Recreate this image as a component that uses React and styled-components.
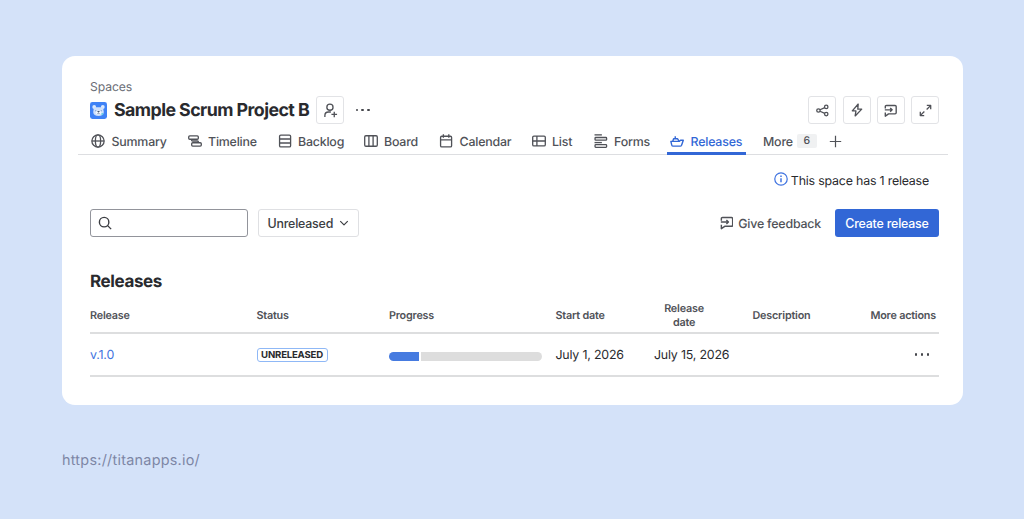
import React from "react";
import styled, { createGlobalStyle } from "styled-components";

const Global = createGlobalStyle`
  * { box-sizing: border-box; }
  body {
    margin: 0;
    background: #d4e2f9;
    font-family: Inter, "Liberation Sans", sans-serif;
    letter-spacing: -0.2px;
    text-rendering: geometricPrecision;
    color: #292a2e;
  }
  button { letter-spacing: inherit; }
`;

const Page = styled.main`
  width: 1024px;
  height: 519px;
  padding: 56px 61px 0 62px;
  overflow: hidden;
`;

const Card = styled.section`
  height: 349px;
  padding: 22px 16px 0;
  background: #fff;
  border-radius: 13px;
`;

const Inset = styled.div`
  padding: 0 8px 0 12px;
`;

const Crumb = styled.div`
  height: 16px;
  line-height: 17px;
  font-size: 12.2px;
  color: #6b6e76;
  letter-spacing: -0.1px;
`;

const TitleRow = styled.div`
  display: flex;
  align-items: center;
  height: 28px;
  margin-top: 2px;
`;

const Title = styled.h1`
  width: 196px;
  margin: 2px 6px 0 7px;
  font-size: 17.8px;
  font-weight: 650;
  line-height: 28px;
  white-space: nowrap;
  letter-spacing: -0.56px;
`;

const IconButton = styled.button`
  display: flex;
  align-items: center;
  justify-content: center;
  width: 28px;
  height: 28px;
  padding: 0;
  border: 1px solid #e2e3e6;
  border-radius: 3px;
  background: #fff;
  color: #505258;
`;

const Actions = styled.div`
  display: flex;
  gap: 6.2px;
  margin-left: auto;
`;

const Dots = styled.span`
  display: flex;
  gap: 3.6px;
  margin-left: ${(p) => p.$left || 0}px;
  margin-right: ${(p) => p.$right || 0}px;
  &::before, &::after, & > i {
    content: "";
    width: 2.4px;
    height: 2.4px;
    border-radius: 50%;
    background: #44464b;
  }
`;

const TabBar = styled.nav`
  display: flex;
  width: 870px;
  height: 31px;
  padding-left: 13px;
  border-bottom: 1px solid #dddee1;
`;

const Tab = styled.a`
  position: relative;
  display: flex;
  align-items: center;
  gap: ${(p) => p.$gap ?? 6.5}px;
  width: ${(p) => p.$w}px;
  height: 30px;
  padding-top: 4px;
  font-size: 12.4px;
  font-weight: 530;
  color: ${(p) => (p.$active ? "#3267d6" : "#505258")};
  white-space: nowrap;
  svg { flex: none; }
`;

const Underline = styled.span`
  position: absolute;
  left: -3px;
  bottom: -1px;
  width: 79px;
  height: 3px;
  background: #3267d6;
`;

const Badge = styled.span`
  width: 20px;
  height: 14px;
  border-radius: 2px;
  background: #f0f1f2;
  font-size: 10.5px;
  line-height: 14px;
  text-align: center;
`;

const Notice = styled.div`
  display: flex;
  justify-content: flex-end;
  align-items: center;
  gap: 3px;
  height: 20px;
  margin-top: 15px;
  padding-right: 10px;
  font-size: 12.4px;
`;

const NoticeIcon = styled.span`
  display: flex;
  padding-bottom: 2px;
  color: #3f73e0;
`;

const Toolbar = styled.div`
  display: flex;
  align-items: center;
  height: 28px;
  margin-top: 19px;
`;

const Search = styled.div`
  display: flex;
  align-items: center;
  width: 157.5px;
  height: 28px;
  padding-left: 7px;
  border: 1px solid #92949b;
  border-radius: 3px;
  color: #3b3d42;
`;

const Select = styled.button`
  display: flex;
  align-items: center;
  gap: 5.5px;
  width: 101.5px;
  height: 28px;
  margin-left: 10px;
  padding: 0 0 0 9px;
  border: 1px solid #dfe0e3;
  border-radius: 3px;
  background: #fff;
  color: #3b3d42;
  font: 530 12.4px Inter, sans-serif;
`;

const Feedback = styled.div`
  display: flex;
  align-items: center;
  gap: 5px;
  margin-left: auto;
  color: #505258;
  font-size: 12.4px;
  font-weight: 530;
`;

const Primary = styled.button`
  width: 104px;
  height: 28px;
  margin-left: 14px;
  padding: 0;
  border: 0;
  border-radius: 3px;
  background: #3267d6;
  color: #fff;
  font: 530 12.4px Inter, sans-serif;
  white-space: nowrap;
`;

const Heading = styled.h2`
  margin: 33px 0 0;
  font-size: 17px;
  font-weight: 650;
  line-height: 25px;
  letter-spacing: -0.38px;
`;

const Row = styled.div`
  display: grid;
  grid-template-columns: 166.5px 132.5px 166.5px 98.5px 98.5px 1fr auto;
  align-items: center;
  height: ${(p) => p.$h}px;
  padding-top: ${(p) => p.$top || 0}px;
  border-bottom: 2px solid #dddedf;
  font-size: 12.4px;
`;

const Head = styled.span`
  width: ${(p) => (p.$narrow ? "60px" : "auto")};
  text-align: ${(p) => (p.$narrow ? "center" : "left")};
  padding-right: ${(p) => p.$end || 0}px;
  font-size: 10.8px;
  font-weight: 600;
  line-height: 13.6px;
  color: #505258;
`;

const Link = styled.a`
  color: #3f73e0;
`;

const Lozenge = styled.span`
  justify-self: start;
  width: 71px;
  height: 14px;
  margin-top: 1px;
  border: 1px solid #8fb8f6;
  border-radius: 3px;
  font-size: 9.6px;
  font-weight: 650;
  line-height: 13px;
  text-align: center;
`;

const Progress = styled.div`
  display: flex;
  gap: 2px;
  width: 153px;
  height: 9px;
  margin-top: 3px;
  border-radius: 5px;
  overflow: hidden;
`;

const Segment = styled.span`
  flex: ${(p) => p.$grow};
  background: ${(p) => p.$color};
`;

const Source = styled.footer`
  margin-top: 46px;
  font-size: 14.4px;
  line-height: 20px;
  letter-spacing: 0.25px;
  color: #7d86a5;
`;

const Icon = ({ size = 14, w = 1.5, children }) => (
  <svg width={size} height={size} viewBox="0 0 16 16" fill="none" stroke="currentColor" strokeWidth={w} strokeLinejoin="round">
    {children}
  </svg>
);

const GlobeIcon = () => (
  <Icon>
    <circle cx="8" cy="8" r="7" />
    <ellipse cx="8" cy="8" rx="3" ry="7" />
    <path d="M1 8h14" />
  </Icon>
);
const TimelineIcon = () => (
  <Icon>
    <rect x="0.8" y="2.2" width="11" height="3.8" rx="1.2" />
    <rect x="4.2" y="10" width="11" height="3.8" rx="1.2" />
    <path d="M4 6v.6c0 .8.6 1.4 1.4 1.4h5.2c.8 0 1.4.6 1.4 1.4v.6" />
  </Icon>
);
const BacklogIcon = () => (
  <Icon>
    <rect x="1.8" y="1.2" width="12.6" height="13.6" rx="1.4" />
    <path d="M1.8 5.7h12.6M1.8 10.3h12.6" />
  </Icon>
);
const BoardIcon = () => (
  <Icon>
    <rect x="0.8" y="2" width="14.4" height="12" rx="1.4" />
    <path d="M5.6 2v12M10.4 2v12" />
  </Icon>
);
const CalendarIcon = () => (
  <Icon>
    <rect x="1.8" y="2.6" width="12.6" height="12.2" rx="1.4" />
    <path d="M1.8 6.7h12.6M5 0.4v4M11.2 0.4v4" />
  </Icon>
);
const ListIcon = () => (
  <Icon>
    <rect x="0.8" y="2.4" width="14.4" height="11.2" rx="1.4" />
    <path d="M0.8 8h14.4M5.6 2.4v11.2" />
  </Icon>
);
const FormsIcon = () => (
  <Icon>
    <path d="M0.6 1h8.4" />
    <rect x="1.2" y="4" width="13.2" height="3" rx="0.8" />
    <path d="M0.6 9.8h8.4" />
    <rect x="1.2" y="12.2" width="13.2" height="3" rx="0.8" />
  </Icon>
);
const ShipIcon = () => (
  <Icon w={1.6}>
    <path d="M1 8.4h9.6l1.4-1.2h3.2l-2 5.6c-.3.7-.8 1.1-1.5 1.1H3.6c-.8 0-1.4-.5-1.6-1.2z" />
    <path d="M3.2 8.2l.9-2.8h4.6l1.5 2.8M6 5V2.6" />
  </Icon>
);
const PlusIcon = () => (
  <Icon size={13}>
    <path d="M8 1v14M1 8h14" />
  </Icon>
);
const PersonAddIcon = () => (
  <Icon size={15} w={1.4}>
    <circle cx="7.4" cy="4.4" r="3.3" />
    <path d="M2 14.8v-1.4c0-2.4 1.6-3.8 3.8-3.8h2.6M12 9.2v6M9 12.2h6" />
  </Icon>
);
const ShareIcon = () => (
  <Icon size={13} w={1.6}>
    <circle cx="3" cy="8" r="2.1" />
    <circle cx="12.6" cy="3.6" r="2.1" />
    <circle cx="12.6" cy="12.4" r="2.1" />
    <path d="M5 7.1l5.7-2.6M5 8.9l5.7 2.6" />
  </Icon>
);
const BoltIcon = () => (
  <Icon size={14}>
    <path d="M9.4 1.2L2.6 9h4.2l-.9 5.8L13.4 7H8.9z" />
  </Icon>
);
const FeedbackIcon = ({ size = 13.5, w = 1.7 }) => (
  <Icon size={size} w={w}>
    <path d="M1.6 5.6V3.2c0-.8.6-1.4 1.4-1.4h10.6c.8 0 1.4.6 1.4 1.4v7.6c0 .8-.6 1.4-1.4 1.4H5.6L1.6 15v-4.6" />
    <path d="M1 7.2h8.6M7.6 4.8L10 7.2 7.6 9.6" />
  </Icon>
);
const ExpandIcon = () => (
  <Icon size={13} w={1.6}>
    <path d="M9.6 1.8h4.8v4.8M14.2 2L9.4 6.8M6.4 14.2H1.6V9.4M1.8 14l4.8-4.8" />
  </Icon>
);
const InfoIcon = () => (
  <Icon size={14} w={1.4}>
    <circle cx="8" cy="8" r="7.1" />
    <path d="M8 7v4.8M8 4v1.7" strokeWidth="1.7" />
  </Icon>
);
const SearchIcon = () => (
  <Icon size={14} w={1.6}>
    <circle cx="7" cy="7" r="5.4" />
    <path d="M11 11l4 4" />
  </Icon>
);
const ChevronIcon = () => (
  <Icon size={10} w={1.9}>
    <path d="M2 5l6 6 6-6" />
  </Icon>
);
const ProjectAvatar = () => (
  <svg width="17" height="17" viewBox="0 0 17 17">
    <rect width="17" height="17" rx="2.4" fill="#3f82f6" />
    <circle cx="4.2" cy="5" r="1.9" fill="#dceafd" />
    <circle cx="12.8" cy="5" r="1.9" fill="#dceafd" />
    <path d="M4 5.2h9l.8 4.8c0 2.6-2.2 4-5.3 4s-5.3-1.4-5.3-4z" fill="#cfe0fb" />
    <ellipse cx="8.5" cy="10.4" rx="2.8" ry="2.1" fill="#f2f7ff" />
    <circle cx="5.8" cy="8.8" r=".5" fill="#4b6ea8" />
    <circle cx="11.2" cy="8.8" r=".5" fill="#4b6ea8" />
    <path d="M7.5 9.3h2l-1 1.1zM7.2 11.6h2.6" fill="#243757" stroke="#243757" strokeWidth=".4" />
    <circle cx="12.3" cy="12" r="1" fill="#62cfe0" />
  </svg>
);

const tabs = [
  ["Summary", GlobeIcon, 96.5],
  ["Timeline", TimelineIcon, 90],
  ["Backlog", BacklogIcon, 86],
  ["Board", BoardIcon, 75.5],
  ["Calendar", CalendarIcon, 92.5],
  ["List", ListIcon, 62],
  ["Forms", FormsIcon, 76.5],
  ["Releases", ShipIcon, 93],
];

export default function App() {
  return (
    <>
      <Global />
      <Page>
        <Card>
          <Inset>
            <Crumb>Spaces</Crumb>
            <TitleRow>
              <ProjectAvatar />
              <Title>Sample Scrum Project B</Title>
              <IconButton aria-label="Add people"><PersonAddIcon /></IconButton>
              <Dots $left={11.5}><i /></Dots>
              <Actions>
                <IconButton aria-label="Share"><ShareIcon /></IconButton>
                <IconButton aria-label="Automation"><BoltIcon /></IconButton>
                <IconButton aria-label="Feedback"><FeedbackIcon size={13} /></IconButton>
                <IconButton aria-label="Full screen"><ExpandIcon /></IconButton>
              </Actions>
            </TitleRow>
          </Inset>
          <TabBar>
            {tabs.map(([label, Glyph, width]) => (
              <Tab key={label} $w={width} $active={label === "Releases"}>
                <Glyph />
                {label}
                {label === "Releases" && <Underline />}
              </Tab>
            ))}
            <Tab $w={66} $gap={4}>More<Badge>6</Badge></Tab>
            <Tab $w={20}><PlusIcon /></Tab>
          </TabBar>
          <Inset>
            <Notice>
              <NoticeIcon><InfoIcon /></NoticeIcon>
              This space has 1 release
            </Notice>
            <Toolbar>
              <Search><SearchIcon /></Search>
              <Select>Unreleased<ChevronIcon /></Select>
              <Feedback><FeedbackIcon />Give feedback</Feedback>
              <Primary>Create release</Primary>
            </Toolbar>
            <Heading>Releases</Heading>
            <Row $h={39} $top={5}>
              <Head>Release</Head>
              <Head>Status</Head>
              <Head>Progress</Head>
              <Head>Start date</Head>
              <Head $narrow>Release date</Head>
              <Head>Description</Head>
              <Head $end={3}>More actions</Head>
            </Row>
            <Row $h={43}>
              <Link>v.1.0</Link>
              <Lozenge>UNRELEASED</Lozenge>
              <Progress>
                <Segment $grow={30} $color="#467be0" />
                <Segment $grow={121} $color="#dddddd" />
              </Progress>
              <span>July 1, 2026</span>
              <span>July 15, 2026</span>
              <span />
              <Dots $right={10}><i /></Dots>
            </Row>
          </Inset>
        </Card>
        <Source>https://titanapps.io/</Source>
      </Page>
    </>
  );
}
